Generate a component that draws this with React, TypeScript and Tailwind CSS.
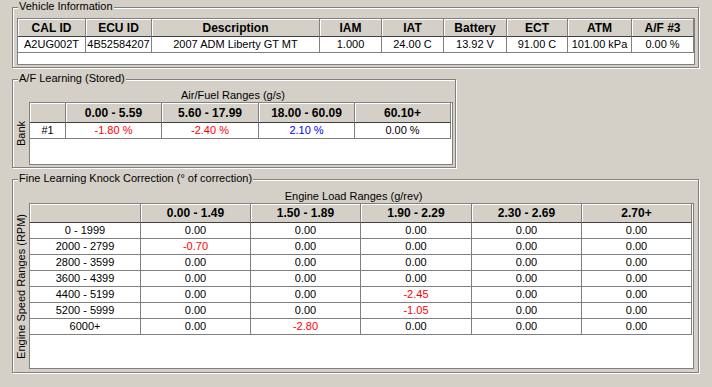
import React from "react";

type Cell = { text: string; color?: "red" | "blue" };

const vehicleHeaders = ["CAL ID", "ECU ID", "Description", "IAM", "IAT", "Battery", "ECT", "ATM", "A/F #3"];
const vehicleRow: Cell[] = [
  "A2UG002T",
  "4B52584207",
  "2007 ADM Liberty GT MT",
  "1.000",
  "24.00 C",
  "13.92 V",
  "91.00 C",
  "101.00 kPa",
  "0.00 %",
].map((text) => ({ text }));

const afHeaders = ["", "0.00 - 5.59", "5.60 - 17.99", "18.00 - 60.09", "60.10+"];
const afRow: Cell[] = [
  { text: "#1" },
  { text: "-1.80 %", color: "red" },
  { text: "-2.40 %", color: "red" },
  { text: "2.10 %", color: "blue" },
  { text: "0.00 %" },
];

const knockHeaders = ["", "0.00 - 1.49", "1.50 - 1.89", "1.90 - 2.29", "2.30 - 2.69", "2.70+"];
const knockData: [string, string[]][] = [
  ["0 - 1999", ["0.00", "0.00", "0.00", "0.00", "0.00"]],
  ["2000 - 2799", ["-0.70", "0.00", "0.00", "0.00", "0.00"]],
  ["2800 - 3599", ["0.00", "0.00", "0.00", "0.00", "0.00"]],
  ["3600 - 4399", ["0.00", "0.00", "0.00", "0.00", "0.00"]],
  ["4400 - 5199", ["0.00", "0.00", "-2.45", "0.00", "0.00"]],
  ["5200 - 5999", ["0.00", "0.00", "-1.05", "0.00", "0.00"]],
  ["6000+", ["0.00", "-2.80", "0.00", "0.00", "0.00"]],
];
const knockRows: Cell[][] = knockData.map(([rpm, vals]) => [
  { text: rpm },
  ...vals.map((v) => ({ text: v, color: v.startsWith("-") ? ("red" as const) : undefined })),
]);

function Group({
  title,
  className,
  children,
}: {
  title: string;
  className: string;
  children: React.ReactNode;
}) {
  return (
    <div
      className={`relative border border-[#808080] shadow-[inset_1px_1px_0_#fff,1px_1px_0_#fff] ${className}`}
    >
      <span className="absolute left-[5px] -top-[8px] bg-[#d4d0c8] px-[1px] leading-[13px] whitespace-nowrap">
        {title}
      </span>
      {children}
    </div>
  );
}

function Grid({
  cols,
  headers,
  rows,
  headerH,
  height,
}: {
  cols: string;
  headers: string[];
  rows: Cell[][];
  headerH: string;
  height: string;
}) {
  return (
    <div className={`border border-[#808080] bg-white ${height}`}>
      <div className={`grid ${cols}`}>
        {headers.map((h, i) => (
          <div
            key={i}
            className={`${headerH} flex items-center justify-center bg-[#d4d0c8] text-[12px] font-bold border-r border-b border-r-[#808080] border-b-[#404040] shadow-[inset_1px_1px_0_#fff] whitespace-nowrap`}
          >
            {h}
          </div>
        ))}
        {rows.map((row, r) =>
          row.map((c, i) => (
            <div
              key={`${r}-${i}`}
              className={`h-[16px] leading-[15px] text-center border-r border-b border-[#808080] whitespace-nowrap ${
                c.color === "red" ? "text-[#ff0000]" : c.color === "blue" ? "text-[#0000ff]" : "text-black"
              }`}
            >
              {c.text}
            </div>
          ))
        )}
      </div>
    </div>
  );
}

export default function App() {
  return (
    <div className="w-[712px] h-[387px] bg-[#d4d0c8] text-black text-[11px] font-['Liberation_Sans',Arial,sans-serif] flex flex-col pt-[7px] pl-[12px] overflow-hidden">
      {/* Vehicle info */}
      <Group title="Vehicle Information" className="w-[687px] h-[61px] pt-[10px] pl-[4px] pr-[3px]">
        <Grid
          cols="grid-cols-[68px_66px_168px_62px_62px_63px_61px_64px_62px]"
          headers={vehicleHeaders}
          rows={[vehicleRow]}
          headerH="h-[18px]"
          height="h-[47px]"
        />
      </Group>

      {/* A/F learning */}
      <Group title="A/F Learning (Stored)" className="mt-[11px] w-[444px] h-[89px] pt-[8px] pr-[2px] flex flex-col">
        <div className="h-[14px] leading-[14px] text-center">Air/Fuel Ranges (g/s)</div>
        <div className="flex">
          <div className="w-[16px] flex items-center justify-center pl-[1px]">
            <span className="[writing-mode:vertical-rl] rotate-180 leading-[13px]">Bank</span>
          </div>
          <div className="flex-1">
            <Grid
              cols="grid-cols-[36px_96px_97px_96px_96px]"
              headers={afHeaders}
              rows={[afRow]}
              headerH="h-[20px]"
              height="h-[63px]"
            />
          </div>
        </div>
      </Group>

      {/* Knock correction */}
      <Group
        title="Fine Learning Knock Correction (° of correction)"
        className="mt-[11px] w-[687px] h-[194px] pt-[9px] pr-[4px] flex flex-col"
      >
        <div className="h-[14px] leading-[14px] text-center">Engine Load Ranges (g/rev)</div>
        <div className="flex">
          <div className="w-[16px] flex items-center justify-center pl-[1px]">
            <span className="[writing-mode:vertical-rl] rotate-180 leading-[13px] whitespace-nowrap">
              Engine Speed Ranges (RPM)
            </span>
          </div>
          <div className="flex-1">
            <Grid
              cols="grid-cols-[111px_110px_110px_111px_110px_110px]"
              headers={knockHeaders}
              rows={knockRows}
              headerH="h-[19px]"
              height="h-[166px]"
            />
          </div>
        </div>
      </Group>
    </div>
  );
}
